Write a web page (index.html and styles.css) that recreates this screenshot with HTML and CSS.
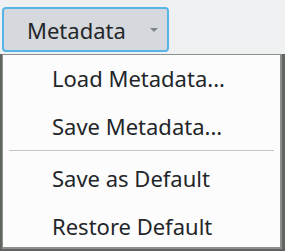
FILE: index.html
```html
<!DOCTYPE html>
<html>
<head>
<meta charset="utf-8">
<link rel="stylesheet" href="styles.css">
</head>
<body>
<button class="combo">
  <span class="combo-label">Metadata</span>
  <svg class="combo-arrow" width="8" height="4" viewBox="0 0 8 4"><path d="M0 0H8L4 4Z" fill="#7f8488"/></svg>
</button>
<div class="shadow">
  <div class="menu">
    <div class="item">Load Metadata...</div>
    <div class="item">Save Metadata...</div>
    <div class="sep"></div>
    <div class="item">Save as Default</div>
    <div class="item">Restore Default</div>
  </div>
</div>
</body>
</html>
```
FILE: styles.css
```css
html, body {
  margin: 0;
  padding: 0;
  background: #eff0f1;
  font-family: "Noto Sans", "Open Sans", sans-serif;
  color: #232629;
  overflow: hidden;
}
.combo {
  display: flex;
  align-items: center;
  box-sizing: border-box;
  width: 167px;
  height: 45px;
  margin: 7px 0 0 2px;
  padding: 0 9px 0 23px;
  border: 2px solid #58b4e5;
  border-radius: 4px;
  background: #d5d9dd;
  font-family: inherit;
  font-size: 22px;
  color: #232629;
}
.combo-label {
  flex: 1;
  text-align: left;
}
.combo-arrow {
  display: block;
  margin-top: 1px;
}
.shadow {
  box-sizing: border-box;
  width: 285px;
  height: 197px;
  margin-top: 2px;
  border-left: 2px solid #60655f;
  border-right: 3px solid #60655f;
  border-bottom: 2px solid #60655f;
}
.menu {
  box-sizing: border-box;
  height: 195px;
  background: #fcfcfc;
  border-top: 1px solid #8d8f8c;
  border-left: 1px solid #8d8f8c;
  border-right: 2px solid #8d8f8c;
  border-bottom: 2px solid #8d8f8c;
  padding-top: 3px;
  overflow: hidden;
  font-size: 22px;
}
.item {
  height: 40px;
  line-height: 40px;
  padding-left: 49px;
  white-space: nowrap;
}
.item + .item {
  margin-top: 8px;
}
.sep {
  height: 1px;
  background: #c2c3c4;
  margin: 4px 6px 7px 6px;
}
```
